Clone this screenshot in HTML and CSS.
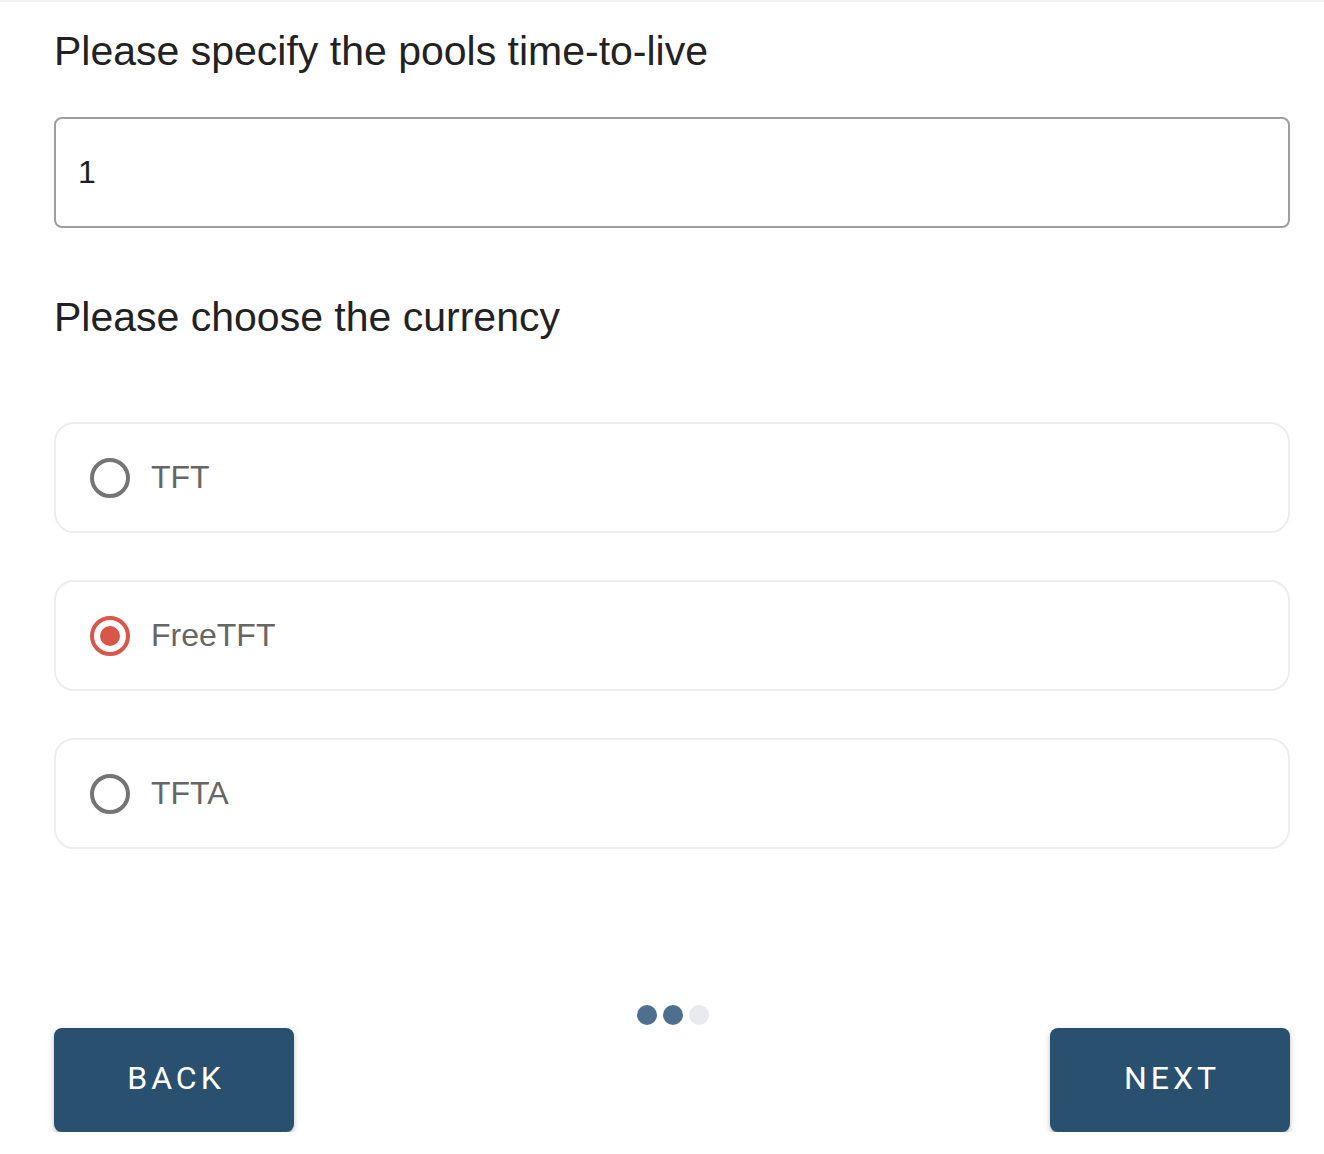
FILE: index.html
```html
<!DOCTYPE html>
<html lang="en">
<head>
<meta charset="utf-8">
<title>Pool settings</title>
<link rel="stylesheet" href="styles.css">
</head>
<body>
<div class="page">
  <h2 class="question q-ttl">Please specify the pools time-to-live</h2>
  <div class="field"><input class="field-input" type="text" value="1"></div>

  <h2 class="question q-currency">Please choose the currency</h2>
  <div class="options">
    <label class="option">
      <span class="radio"></span>
      <span class="option-label">TFT</span>
    </label>
    <label class="option">
      <span class="radio radio-on"><span class="radio-dot"></span></span>
      <span class="option-label">FreeTFT</span>
    </label>
    <label class="option">
      <span class="radio"></span>
      <span class="option-label">TFTA</span>
    </label>
  </div>

  <div class="footer">
    <div class="steps">
      <span class="step step-done"></span>
      <span class="step step-done"></span>
      <span class="step"></span>
    </div>
    <div class="actions">
      <button class="btn">BACK</button>
      <button class="btn">NEXT</button>
    </div>
  </div>
</div>
</body>
</html>
```

FILE: styles.css
```css
html, body {
  margin: 0;
  padding: 0;
  background: #ffffff;
}

body {
  font-family: "Liberation Sans", Arial, sans-serif;
  color: #212121;
  border-top: 2px solid #f2f2f2;
}

.page {
  padding: 25px 34px 0 54px;
  display: flex;
  flex-direction: column;
}

.question {
  margin: 0;
  font-size: 41px;
  line-height: 48px;
  font-weight: 400;
  color: #222222;
}

.field {
  margin-top: 42px;
}

.field-input {
  box-sizing: border-box;
  width: 100%;
  height: 111px;
  border: 2px solid #9e9e9e;
  border-radius: 8px;
  padding: 0 22px;
  font-family: "Liberation Sans", Arial, sans-serif;
  font-size: 32px;
  color: #1e1e1e;
  outline: none;
  background: #fff;
}

.q-currency {
  margin-top: 65px;
}

.options {
  margin-top: 81px;
  display: flex;
  flex-direction: column;
  gap: 47px;
}

.option {
  box-sizing: border-box;
  height: 111px;
  border: 2px solid #eceeee;
  border-radius: 20px;
  display: flex;
  align-items: center;
  padding-left: 34px;
  gap: 21px;
}

.radio {
  box-sizing: border-box;
  width: 40px;
  height: 40px;
  border: 4px solid #757575;
  border-radius: 50%;
  display: flex;
  align-items: center;
  justify-content: center;
  flex: none;
}

.radio-on {
  border-color: #d8574a;
}

.radio-dot {
  width: 20px;
  height: 20px;
  border-radius: 50%;
  background: #d8574a;
}

.option-label {
  font-size: 32px;
  color: #666666;
}

.footer {
  margin-top: 156px;
  display: flex;
  flex-direction: column;
}

.steps {
  display: flex;
  justify-content: center;
  gap: 6px;
  height: 20px;
  padding-left: 2px;
}

.step {
  width: 20px;
  height: 20px;
  border-radius: 50%;
  background: #e8eaed;
}

.step-done {
  background: #4f6f8f;
}

.actions {
  margin-top: 3px;
  display: flex;
  justify-content: space-between;
}

.btn {
  width: 240px;
  height: 104px;
  border: none;
  border-radius: 8px;
  background: #29506f;
  color: #ffffff;
  font-family: Roboto, "Liberation Sans", sans-serif;
  font-size: 32px;
  font-weight: 400;
  letter-spacing: 4px;
  padding: 0 0 4px 4px;
  box-shadow: 0 4px 2px -2px rgba(0,0,0,0.2), 0 3px 4px rgba(0,0,0,0.14), 0 2px 8px rgba(0,0,0,0.12);
  cursor: pointer;
}
```
